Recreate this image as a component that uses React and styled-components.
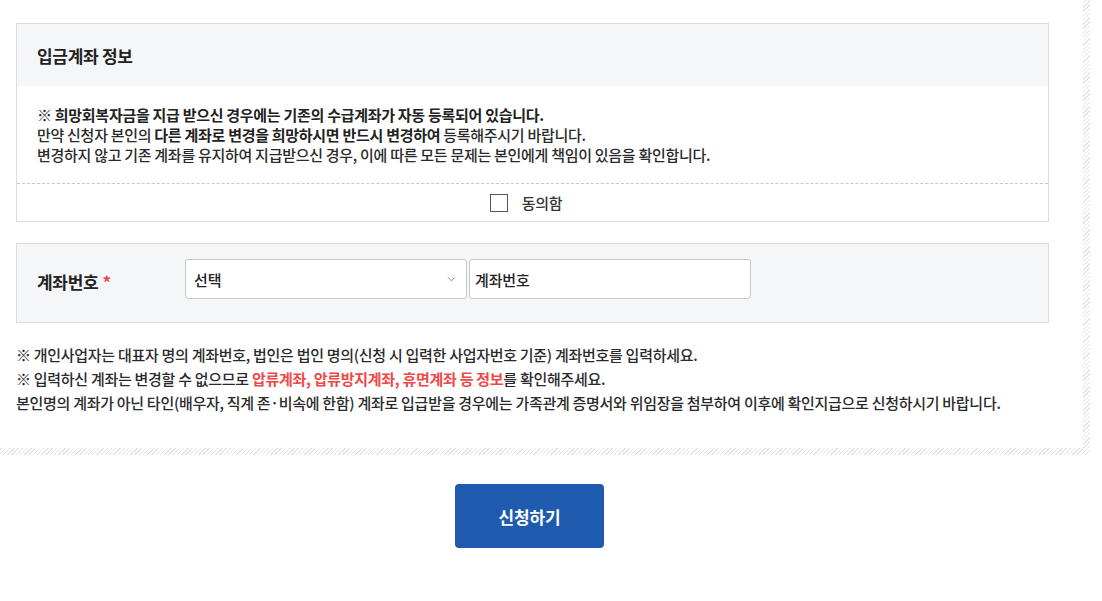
import React, { useState } from "react";
import styled, { createGlobalStyle } from "styled-components";

const GlobalStyle = createGlobalStyle`
  html, body {
    margin: 0;
    padding: 0;
    background: #fff;
  }
  body {
    font-family: "Noto Sans CJK KR", "Noto Sans", sans-serif;
    color: #222;
    letter-spacing: -0.018em;
  }
  * {
    box-sizing: border-box;
  }
`;

function App() {
  const [agree, setAgree] = useState(false);

  return (
    <>
      <GlobalStyle />
      <Hatch>
        <Panel>
          <InfoBox>
            <InfoHead>입금계좌 정보</InfoHead>
            <Notice>
              <b>※ 희망회복자금을 지급 받으신 경우에는 기존의 수급계좌가 자동 등록되어 있습니다.</b>
              <br />
              만약 신청자 본인의 <b>다른 계좌로 변경을 희망하시면 반드시 변경하여</b> 등록해주시기 바랍니다.
              <br />
              변경하지 않고 기존 계좌를 유지하여 지급받으신 경우, 이에 따른 모든 문제는 본인에게 책임이 있음을 확인합니다.
            </Notice>
            <AgreeRow>
              <AgreeLabel>
                <CheckBox
                  type="checkbox"
                  checked={agree}
                  onChange={() => setAgree(!agree)}
                />
                동의함
              </AgreeLabel>
            </AgreeRow>
          </InfoBox>

          <AccountBox>
            <FieldLabel>
              계좌번호 <Star>*</Star>
            </FieldLabel>
            <SelectWrap>
              <Select defaultValue="">
                <option value="">선택</option>
              </Select>
              <Chevron viewBox="0 0 10 6">
                <path d="M1 1l4 4 4-4" fill="none" stroke="#777" strokeWidth="1" />
              </Chevron>
            </SelectWrap>
            <Input placeholder="계좌번호" />
          </AccountBox>

          <Notes>
            <p>※ 개인사업자는 대표자 명의 계좌번호, 법인은 법인 명의(신청 시 입력한 사업자번호 기준) 계좌번호를 입력하세요.</p>
            <p>
              ※ 입력하신 계좌는 변경할 수 없으므로{" "}
              <Red>압류계좌, 압류방지계좌, 휴면계좌 등 정보</Red>를 확인해주세요.
            </p>
            <p>본인명의 계좌가 아닌 타인(배우자, 직계 존·비속에 한함) 계좌로 입급받을 경우에는 가족관계 증명서와 위임장을 첨부하여 이후에 확인지급으로 신청하시기 바랍니다.</p>
          </Notes>
        </Panel>
      </Hatch>

      <BtnArea>
        <SubmitBtn type="button">신청하기</SubmitBtn>
      </BtnArea>
    </>
  );
}

export default App;

const Hatch = styled.div`
  width: 1090px;
  padding: 0 7px 7px 0;
  background: repeating-linear-gradient(
    -45deg,
    #e4e4e8 0px,
    #e4e4e8 1px,
    #fff 1px,
    #fff 3px
  );
`;

const Panel = styled.div`
  background: #fff;
  padding: 23px 34px 33px 16px;
`;

const InfoBox = styled.div`
  border: 1px solid #dcdcdc;
`;

const InfoHead = styled.div`
  height: 62px;
  background: #f5f6f8;
  padding-left: 20px;
  display: flex;
  align-items: center;
  font-size: 17px;
  font-weight: 700;
  color: #222;
`;

const Notice = styled.div`
  padding: 19px 20px 18px;
  font-size: 15px;
  line-height: 20px;
  font-weight: 500;
  color: #2a2a2a;
  border-bottom: 1px dashed #c8c8c8;
  b {
    font-weight: 700;
    color: #222;
  }
`;

const AgreeRow = styled.div`
  height: 37px;
  display: flex;
  align-items: center;
  justify-content: center;
`;

const AgreeLabel = styled.label`
  display: flex;
  align-items: center;
  gap: 14px;
  font-size: 15px;
  font-weight: 500;
  color: #333;
  margin-right: 13px;
  cursor: pointer;
`;

const CheckBox = styled.input`
  appearance: none;
  width: 18px;
  height: 18px;
  margin: 0;
  border: 1px solid #555;
  background: #fff;
  cursor: pointer;
  &:checked {
    background: #1e5aae;
    border-color: #1e5aae;
  }
`;

const AccountBox = styled.div`
  margin-top: 21px;
  height: 80px;
  background: #f5f6f8;
  border: 1px solid #dcdcdc;
  display: flex;
  align-items: flex-start;
  padding: 15px 0 0 20px;
  gap: 2px;
`;

const FieldLabel = styled.div`
  width: 146px;
  height: 40px;
  display: flex;
  align-items: center;
  padding-top: 4px;
  gap: 4px;
  font-size: 17px;
  font-weight: 700;
  color: #222;
`;

const Star = styled.span`
  color: #f04848;
`;

const SelectWrap = styled.div`
  position: relative;
  width: 282px;
  height: 40px;
`;

const Select = styled.select`
  appearance: none;
  width: 100%;
  height: 100%;
  border: 1px solid #c9c9c9;
  border-radius: 3px;
  background: #fff;
  padding: 0 8px;
  font-family: inherit;
  font-size: 15px;
  font-weight: 500;
  color: #222;
  letter-spacing: -0.01em;
  outline: none;
`;

const Chevron = styled.svg`
  position: absolute;
  right: 11px;
  top: 17px;
  width: 9px;
  height: 6px;
  pointer-events: none;
`;

const Input = styled.input`
  width: 282px;
  height: 40px;
  border: 1px solid #c9c9c9;
  border-radius: 3px;
  background: #fff;
  padding: 0 5px;
  font-family: inherit;
  font-size: 15px;
  font-weight: 500;
  letter-spacing: -0.01em;
  outline: none;
  &::placeholder {
    color: #222;
  }
`;

const Notes = styled.div`
  margin-top: 20px;
  font-size: 15px;
  font-weight: 500;
  color: #2a2a2a;
  line-height: 24px;
  p {
    margin: 0;
  }
`;

const Red = styled.b`
  color: #f04848;
  font-weight: 700;
`;

const BtnArea = styled.div`
  display: flex;
  justify-content: center;
  padding-top: 29px;
  padding-right: 43px;
`;

const SubmitBtn = styled.button`
  width: 149px;
  height: 64px;
  border: none;
  border-radius: 4px;
  background: #1e5aae;
  color: #fff;
  font-family: inherit;
  font-size: 17px;
  font-weight: 700;
  letter-spacing: -0.01em;
  cursor: pointer;
`;
